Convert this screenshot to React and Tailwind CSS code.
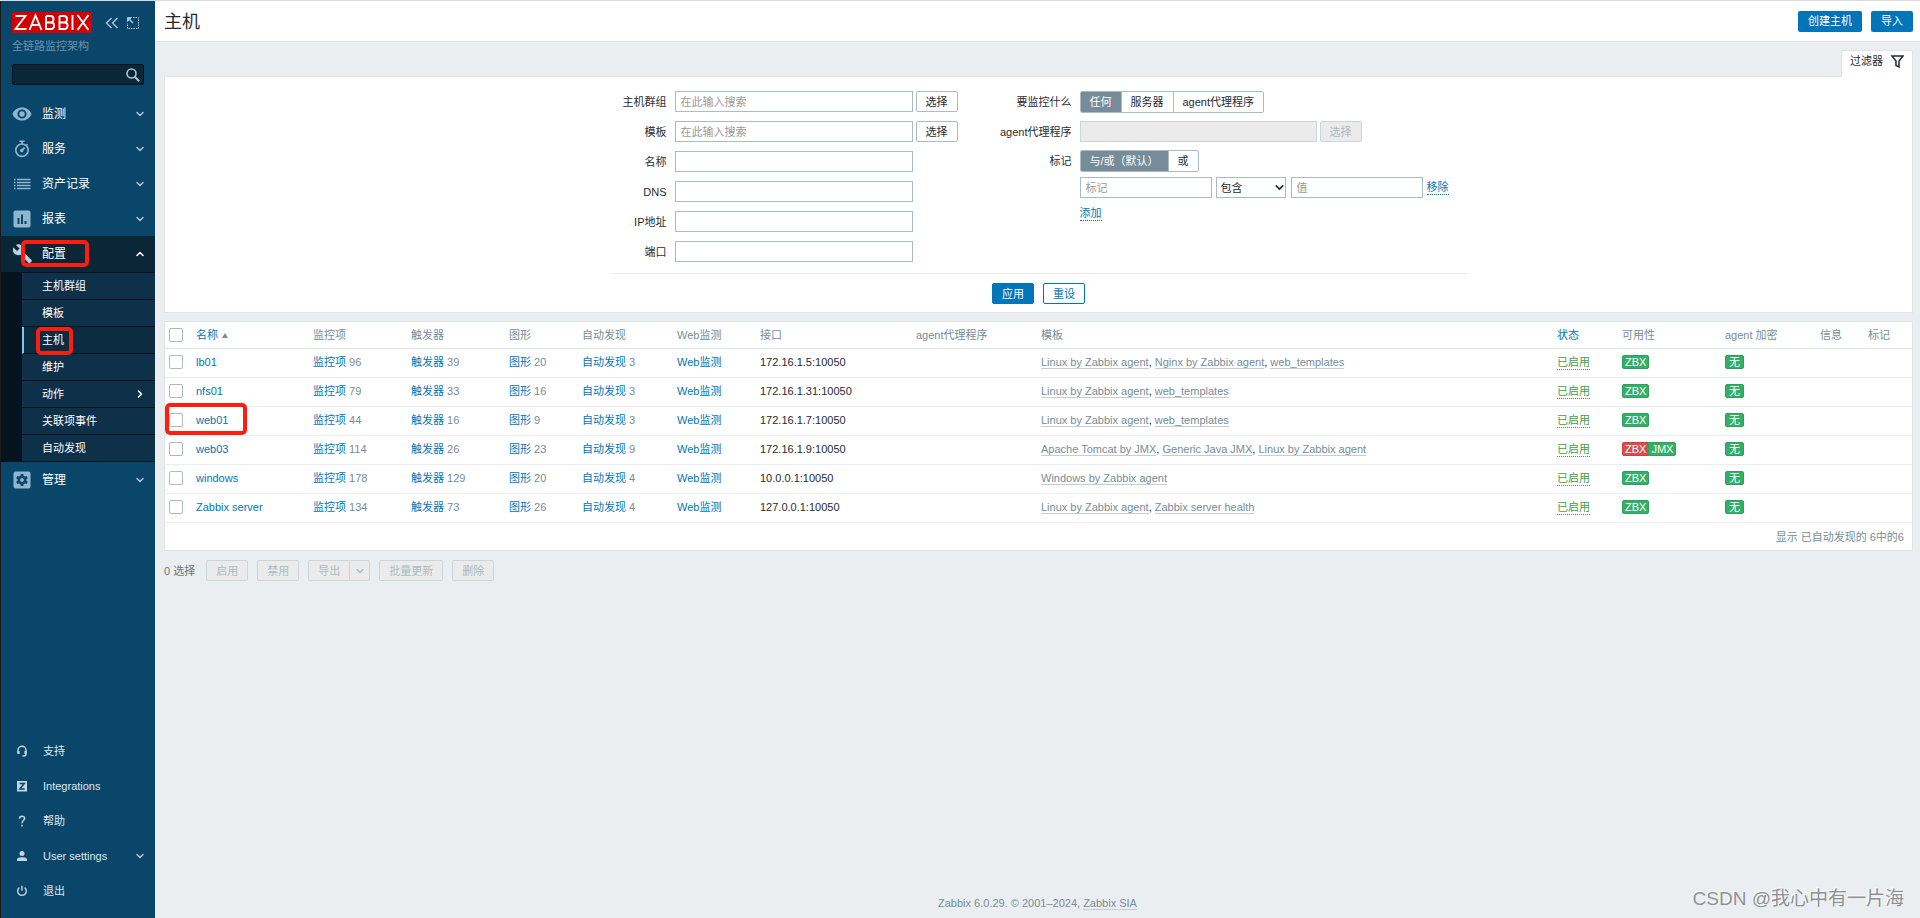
import { useState } from 'react'
import { ChevronDown, ChevronRight, ChevronUp } from 'lucide-react'
import clsx from 'clsx'

const MENU = [
  { label: '监测', icon: EyeIcon },
  { label: '服务', icon: StopwatchIcon },
  { label: '资产记录', icon: ListIcon },
  { label: '报表', icon: ChartIcon }
]

const SUBMENU = [
  { label: '主机群组' },
  { label: '模板' },
  { label: '主机', active: true, marked: true },
  { label: '维护' },
  { label: '动作', nested: true },
  { label: '关联项事件' },
  { label: '自动发现' }
]

const USER_MENU = [
  { label: '支持', icon: HeadsetIcon },
  { label: 'Integrations', icon: IntegrationsIcon },
  { label: '帮助', icon: HelpIcon },
  { label: 'User settings', icon: UserIcon, nested: true },
  { label: '退出', icon: PowerIcon }
]

const LINUX = 'Linux by Zabbix agent'

const HOSTS = [
  { name: 'lb01', items: 96, triggers: 39, graphs: 20, discovery: 3, iface: '172.16.1.5:10050', templates: [LINUX, 'Nginx by Zabbix agent', 'web_templates'] },
  { name: 'nfs01', items: 79, triggers: 33, graphs: 16, discovery: 3, iface: '172.16.1.31:10050', templates: [LINUX, 'web_templates'] },
  { name: 'web01', items: 44, triggers: 16, graphs: 9, discovery: 3, iface: '172.16.1.7:10050', templates: [LINUX, 'web_templates'], marked: true },
  { name: 'web03', items: 114, triggers: 26, graphs: 23, discovery: 9, iface: '172.16.1.9:10050', templates: ['Apache Tomcat by JMX', 'Generic Java JMX', LINUX], jmx: true },
  { name: 'windows', items: 178, triggers: 129, graphs: 20, discovery: 4, iface: '10.0.0.1:10050', templates: ['Windows by Zabbix agent'] },
  { name: 'Zabbix server', items: 134, triggers: 73, graphs: 26, discovery: 4, iface: '127.0.0.1:10050', templates: [LINUX, 'Zabbix server health'] }
]

const INPUT = 'block h-[21px] border border-[#acbbc2] bg-white px-[5px] text-[11px] placeholder:text-[#9a9a9a] focus:outline-none'
const CHECKBOX = 'block size-[14px] appearance-none rounded-[2px] border border-[#acbbc2] bg-white'

function EyeIcon() {
  return (
    <svg width="20" height="20" viewBox="0 0 20 20" fill="#8fb6d1">
      <path fillRule="evenodd" d="M10 3.500C5.600 3.500 2 6 .5 10 2 14 5.600 16.500 10 16.500s8-2.500 9.500-6.500C18 6 14.400 3.500 10 3.500zM10 14.600a4.600 4.600 0 1 1 0-9.200 4.600 4.600 0 0 1 0 9.200z" />
      <circle cx="10" cy="10" r="2.700" />
    </svg>
  )
}

function StopwatchIcon() {
  return (
    <svg width="20" height="20" viewBox="0 0 20 20" fill="none" stroke="#8fb6d1" strokeWidth="1.600">
      <circle cx="10" cy="11.200" r="6.200" />
      <path d="M7.500 2.300h5M10 2.300v2.700M14.200 6.500l1.300-1.300" />
      <path d="M12.600 8.600L10 11.200" strokeWidth="2" />
      <circle cx="9.700" cy="11.500" r="1" fill="#8fb6d1" />
    </svg>
  )
}

function ListIcon() {
  return (
    <svg width="20" height="20" viewBox="0 0 20 20" stroke="#8fb6d1" strokeWidth="1.400">
      <path d="M5 5.500h13.500M5 8.500h13.500M5 11.500h13.500M5 14.500h13.500M2 5.500h1.500M2 8.500h1.500M2 11.500h1.500M2 14.500h1.500" />
    </svg>
  )
}

function ChartIcon() {
  return (
    <svg width="20" height="20" viewBox="0 0 20 20">
      <rect x="1.500" y="1.500" width="17" height="17" rx="2" fill="#8fb6d1" />
      <path d="M6.500 9v6M10 5.500V15M13.500 12v3" stroke="#0a466a" strokeWidth="2" />
    </svg>
  )
}

function WrenchIcon() {
  return (
    <svg width="20" height="20" viewBox="0 0 20 20" fill="#b9d3e4">
      <path d="M18.500 16L10.300 7.900c.8-2 .4-4.300-1.300-6C7.300.3 4.900-.1 2.900.9l3.700 3.600L4 7.100.3 3.500c-1 2-.6 4.400 1.100 6 1.700 1.700 4.100 2.100 6.100 1.300l8.200 8.100c.4.400.9.400 1.300 0l1.500-1.500c.4-.4.400-1.100 0-1.400z" />
    </svg>
  )
}

function GearIcon() {
  return (
    <svg width="20" height="20" viewBox="0 0 20 20">
      <rect x="1.500" y="1.500" width="17" height="17" rx="2" fill="#8fb6d1" />
      <circle cx="10" cy="10" r="3.200" fill="none" stroke="#0a466a" strokeWidth="2.600" />
      <path d="M10 4v2M10 14v2M4.800 7l1.700 1M13.500 12l1.700 1M4.800 13l1.700-1M13.500 8l1.700-1" stroke="#0a466a" strokeWidth="2.800" />
    </svg>
  )
}

function HeadsetIcon() {
  return (
    <svg width="12" height="12" viewBox="0 0 12 12" fill="none" stroke="#c3d6e3" strokeWidth="1.400">
      <path d="M2 8V5.200a4 4 0 0 1 8 0V9c0 1.300-.8 2-2.200 2H6.500" />
      <path d="M2.500 6v3M9.500 6v3" strokeWidth="2.200" />
    </svg>
  )
}

function IntegrationsIcon() {
  return (
    <svg width="12" height="12" viewBox="0 0 12 12">
      <rect x="1" y="1" width="10" height="10.500" fill="#c3d6e3" />
      <path d="M3.500 3.500h4.800L3.800 9h4.900" fill="none" stroke="#0a466a" strokeWidth="1.500" />
    </svg>
  )
}

function HelpIcon() {
  return (
    <svg width="12" height="12" viewBox="0 0 12 12" fill="none" stroke="#c3d6e3" strokeWidth="1.500">
      <path d="M3.500 3.800C3.500 2 4.500 1.200 6 1.200s2.600.9 2.600 2.200C8.600 5.300 6 5.300 6 8.200M6 9.800v1.600" />
    </svg>
  )
}

function UserIcon() {
  return (
    <svg width="12" height="12" viewBox="0 0 12 12" fill="#c3d6e3">
      <circle cx="6" cy="3.500" r="2.500" />
      <path d="M1 11V9.500C1 8 4 7.300 6 7.300s5 .7 5 2.200V11z" />
    </svg>
  )
}

function PowerIcon() {
  return (
    <svg width="12" height="12" viewBox="0 0 12 12" fill="none" stroke="#c3d6e3" strokeWidth="1.400">
      <path d="M6 .8v5M3.400 2.600a4.300 4.300 0 1 0 5.200 0" />
    </svg>
  )
}

function Mark({ className }) {
  return (
    <span className={clsx('pointer-events-none absolute z-10 rounded-[5px] border-4 border-[#ff1d10]', className)} />
  )
}

function Sidebar() {
  return (
    <aside className="flex w-[155px] shrink-0 flex-col border-l border-[#1b1b1d] bg-[#0a466a] text-[12px] text-white">
      <div className="mt-[11px] flex items-center pl-[11px]">
        <a href="#" aria-label="Zabbix" className="block bg-[#d40000]">
          <svg width="80" height="21" viewBox="0 0 80 21" fill="none" stroke="#fff" strokeWidth="1.900">
            <path d="M3.500 4h10L3.500 17h11M17.500 18l6-14.500 6 14.500M19.500 13h8" />
            <path d="M34 4v13h4.500c4.800 0 4.800-6.500 0-6.500H34M38.500 10.500c4 0 4-6.500 0-6.500H34M47.500 4v13H52c4.800 0 4.800-6.500 0-6.500h-4.500M52 10.500c4 0 4-6.500 0-6.500h-4.500" />
            <path d="M60.500 3v15M65.500 3l11 15M76.500 3l-11 15" />
          </svg>
        </a>
        <button aria-label="收起" className="ml-[13px]">
          <svg width="14" height="12" viewBox="0 0 14 12" fill="none" stroke="#a9c6da" strokeWidth="1.400">
            <path d="M6.500 1l-5 5 5 5M12.500 1l-5 5 5 5" />
          </svg>
        </button>
        <button aria-label="隐藏" className="ml-2">
          <svg width="12" height="12" viewBox="0 0 12 12" fill="none" stroke="#a9c6da">
            <path d="M6 .5h5.500v11H.5V6" strokeDasharray="1.500 1" />
            <path d="M1 1l5 5" strokeWidth="1.500" />
            <path d="M.5.500h4l-4 4z" fill="#a9c6da" />
          </svg>
        </button>
      </div>
      <div className="mt-[5px] pl-[11px] text-[11px] leading-4 text-[#6c93ad]">全链路监控架构</div>
      <label className="mx-[11px] mt-[10px] flex h-[21px] items-center rounded-[2px] border border-[#03131f] bg-[#0b2637] pr-[3px]">
        <input aria-label="搜索" className="h-full w-full min-w-0 bg-transparent px-1 text-[11px] focus:outline-none" />
        <svg width="14" height="14" viewBox="0 0 14 14" fill="none" stroke="#a9c6da" strokeWidth="1.600" className="shrink-0">
          <circle cx="5.500" cy="5.500" r="4.500" />
          <path d="M8.700 8.700l4.500 4.500" strokeWidth="2" />
        </svg>
      </label>

      <nav className="mt-[11px]">
        {MENU.map(({ label, icon: Icon }) => (
          <a key={label} href="#" className="flex h-[35px] items-center pr-[9px] pl-[11px]">
            <Icon />
            <span className="ml-[10px] flex-1">{label}</span>
            <ChevronDown className="size-3 text-[#a9c6da]" strokeWidth={3} />
          </a>
        ))}
        <a href="#" className="relative flex h-9 items-center bg-[#0b2637] pr-[9px] pl-[12px]">
          <WrenchIcon />
          <span className="ml-[9px] flex-1">配置</span>
          <ChevronUp className="size-3" strokeWidth={3} />
          <Mark className="top-[4px] left-[20px] h-[27px] w-[68px]" />
        </a>
        <div className="bg-[#04131d] pt-px pl-[21px] text-[11px]">
          {SUBMENU.map((item) => (
            <a
              key={item.label}
              href="#"
              className={clsx(
                'relative flex h-[27px] items-center border-b border-[#04131d] pr-[9px]',
                item.active ? 'border-l-2 border-l-[#7cc5f0] bg-[#0b2b40] pl-[18px]' : 'bg-[#0f3049] pl-[20px]'
              )}
            >
              <span className="flex-1">{item.label}</span>
              {item.nested && <ChevronRight className="size-3" strokeWidth={3} />}
              {item.marked && <Mark className="top-0 left-[12px] h-7 w-[37px]" />}
            </a>
          ))}
        </div>
        <a href="#" className="flex h-9 items-center pr-[9px] pl-[11px]">
          <GearIcon />
          <span className="ml-[10px] flex-1">管理</span>
          <ChevronDown className="size-3 text-[#a9c6da]" strokeWidth={3} />
        </a>
      </nav>

      <nav className="mt-auto mb-[10px] text-[11px] text-[#dce8f0]">
        {USER_MENU.map(({ label, icon: Icon, nested }) => (
          <a key={label} href="#" className="flex h-[35px] items-center pr-[9px] pl-[15px]">
            <Icon />
            <span className="ml-[15px] flex-1">{label}</span>
            {nested && <ChevronDown className="size-3 text-[#a9c6da]" strokeWidth={3} />}
          </a>
        ))}
      </nav>
    </aside>
  )
}

function Field({ id, label, labelWidth, children }) {
  return (
    <div className="flex items-center">
      <label htmlFor={id} className={clsx('mr-2 shrink-0 text-right', labelWidth)}>{label}</label>
      {children}
    </div>
  )
}

function SelectButton({ disabled }) {
  return (
    <button
      disabled={disabled}
      className="ml-[3px] h-[21px] rounded-[2px] border border-[#acbbc2] bg-white px-[9px] disabled:border-[#ccd5d9] disabled:bg-[#ebebeb] disabled:text-[#acbbc2]"
    >
      选择
    </button>
  )
}

function Segmented({ name, options }) {
  const [value, setValue] = useState(options[0])
  return (
    <div className="flex h-[22px] overflow-hidden rounded-[2px] border border-[#acbbc2]">
      {options.map((option) => (
        <label
          key={option}
          className="flex items-center border-l border-[#acbbc2] px-[9px] first:border-l-0 has-checked:bg-[#768d99] has-checked:text-white"
        >
          <input
            type="radio"
            name={name}
            checked={value === option}
            onChange={() => setValue(option)}
            className="sr-only"
          />
          {option}
        </label>
      ))}
    </div>
  )
}

function Filter() {
  return (
    <section className="border border-[#dfe4e7] bg-white pt-[14px] pb-2">
      <div className="mx-auto w-[856px]">
        <div className="flex h-[183px] gap-[42px] border-b border-[#ebeef0]">
          <div className="flex flex-col gap-[9px]">
            <Field id="groups" label="主机群组" labelWidth="w-14">
              <input id="groups" className={clsx(INPUT, 'w-[238px]')} placeholder="在此输入搜索" />
              <SelectButton />
            </Field>
            <Field id="templates" label="模板" labelWidth="w-14">
              <input id="templates" className={clsx(INPUT, 'w-[238px]')} placeholder="在此输入搜索" />
              <SelectButton />
            </Field>
            {['名称', 'DNS', 'IP地址', '端口'].map((label) => (
              <Field key={label} id={label} label={label} labelWidth="w-14">
                <input id={label} className={clsx(INPUT, 'w-[238px]')} />
              </Field>
            ))}
          </div>
          <div className="flex flex-col gap-2">
            <Field label="要监控什么" labelWidth="w-[72px]">
              <Segmented name="monitored_by" options={['任何', '服务器', 'agent代理程序']} />
            </Field>
            <Field id="proxy" label="agent代理程序" labelWidth="w-[72px]">
              <input id="proxy" disabled className="h-[21px] w-[237px] border border-[#ccd5d9] bg-[#ebebeb] px-[5px]" />
              <SelectButton disabled />
            </Field>
            <Field label="标记" labelWidth="w-[72px]">
              <Segmented name="evaltype" options={['与/或（默认）', '或']} />
            </Field>
            <div className="-mt-[3px] ml-20">
              <div className="flex items-center">
                <input aria-label="标记" placeholder="标记" className={clsx(INPUT, 'w-[132px]')} />
                <div className="relative ml-1">
                  <select aria-label="运算符" className="block h-[21px] w-[70px] appearance-none border border-[#acbbc2] bg-white px-1 text-[11px]">
                    <option>包含</option>
                    <option>等于</option>
                  </select>
                  <ChevronDown className="pointer-events-none absolute top-1 right-0 size-[13px]" strokeWidth={3} />
                </div>
                <input aria-label="值" placeholder="值" className={clsx(INPUT, 'ml-[5px] w-[132px]')} />
                <a href="#" className="ml-1 border-b border-dotted border-[#0275b8] leading-[14px] text-[#0275b8]">移除</a>
              </div>
              <a href="#" className="mt-2 inline-block border-b border-dotted border-[#0275b8] leading-[14px] text-[#0275b8]">添加</a>
            </div>
          </div>
        </div>
        <div className="mt-[9px] flex justify-center gap-[9px]">
          <button className="h-[21px] rounded-[2px] border border-[#0275b8] bg-[#0275b8] px-[9px] text-white">应用</button>
          <button className="h-[21px] rounded-[2px] border border-[#0275b8] bg-white px-[9px] text-[#0275b8]">重设</button>
        </div>
      </div>
    </section>
  )
}

function CountCell({ label, count }) {
  return (
    <td className="text-[#768d99]">
      <a href="#" className="text-[#0275b8]">{label}</a> {count}
    </td>
  )
}

function HostTable() {
  return (
    <section className="mt-2 border border-[#dfe4e7] bg-white">
      <table className="w-full table-fixed border-separate border-spacing-0 text-left">
        <colgroup>
          <col className="w-[26px]" />
          <col className="w-[117px]" />
          <col className="w-[98px]" />
          <col className="w-[98px]" />
          <col className="w-[73px]" />
          <col className="w-[95px]" />
          <col className="w-[83px]" />
          <col className="w-[156px]" />
          <col className="w-[125px]" />
          <col />
          <col className="w-[65px]" />
          <col className="w-[103px]" />
          <col className="w-[95px]" />
          <col className="w-[48px]" />
          <col className="w-[49px]" />
        </colgroup>
        <thead>
          <tr className="h-[27px] whitespace-nowrap text-[#768d99] *:border-b *:border-[#dfe4e7] *:px-[5px] *:pb-px *:font-normal">
            <th><input type="checkbox" aria-label="全选" className={clsx(CHECKBOX, '-ml-px')} /></th>
            <th>
              <a href="#" className="flex items-center gap-1 text-[#0275b8]">
                名称
                <svg width="6" height="6" viewBox="0 0 6 6" fill="#768d99"><path d="M3 1l3 5H0z" /></svg>
              </a>
            </th>
            <th>监控项</th>
            <th>触发器</th>
            <th>图形</th>
            <th>自动发现</th>
            <th>Web监测</th>
            <th>接口</th>
            <th>agent代理程序</th>
            <th>模板</th>
            <th><a href="#" className="text-[#0275b8]">状态</a></th>
            <th>可用性</th>
            <th>agent 加密</th>
            <th>信息</th>
            <th>标记</th>
          </tr>
        </thead>
        <tbody>
          {HOSTS.map((host) => (
            <tr key={host.name} className="h-[29px] whitespace-nowrap *:border-b *:border-[#ebeef0] *:px-[5px] *:pb-[3px]">
              <td className="relative">
                <input type="checkbox" aria-label={host.name} className={clsx(CHECKBOX, '-ml-px')} />
                {host.marked && <Mark className="top-[-4px] left-0 h-8 w-[82px]" />}
              </td>
              <td><a href="#" className="text-[#0275b8]">{host.name}</a></td>
              <CountCell label="监控项" count={host.items} />
              <CountCell label="触发器" count={host.triggers} />
              <CountCell label="图形" count={host.graphs} />
              <CountCell label="自动发现" count={host.discovery} />
              <CountCell label="Web监测" />
              <td>{host.iface}</td>
              <td />
              <td>
                {host.templates.map((template, i) => (
                  <span key={template}>
                    {i > 0 && ', '}
                    <a href="#" className="border-b border-[#c3cdd2] text-[#768d99]">{template}</a>
                  </span>
                ))}
              </td>
              <td>
                <a href="#" className="inline-block border-b border-dotted border-[#429e47] leading-[13px] text-[#429e47]">已启用</a>
              </td>
              <td>
                <div className="flex text-white">
                  <span
                    className={clsx(
                      'border px-[2px] leading-3',
                      host.jmx ? 'rounded-l-[2px] border-[#d04040] bg-[#d64e4e]' : 'rounded-[2px] border-[#2f9f5e] bg-[#34af67]'
                    )}
                  >
                    ZBX
                  </span>
                  {host.jmx && (
                    <span className="-ml-px rounded-r-[2px] border border-[#2f9f5e] bg-[#34af67] px-[2px] leading-3">JMX</span>
                  )}
                </div>
              </td>
              <td>
                <div className="flex text-white">
                  <span className="rounded-[2px] border border-[#2f9f5e] bg-[#34af67] px-[3px] leading-3">无</span>
                </div>
              </td>
              <td />
              <td />
            </tr>
          ))}
        </tbody>
      </table>
      <div className="flex h-[27px] items-center justify-end pr-2 text-[#768d99]">显示 已自动发现的 6中的6</div>
    </section>
  )
}

function Actions() {
  const button = 'h-[21px] border border-[#ccd5d9] bg-[#ebebeb] px-[9px] text-[#acbbc2]'
  return (
    <div className="mt-[9px] flex items-center gap-[9px]">
      <span className="mr-[2px] text-[#66777f]">0 选择</span>
      <button disabled className={clsx(button, 'rounded-[2px]')}>启用</button>
      <button disabled className={clsx(button, 'rounded-[2px]')}>禁用</button>
      <div className="flex">
        <button disabled className={clsx(button, 'rounded-l-[2px]')}>导出</button>
        <button disabled aria-label="导出格式" className="-ml-px flex h-[21px] w-[21px] items-center justify-center rounded-r-[2px] border border-[#ccd5d9] bg-[#ebebeb] text-[#acbbc2]">
          <ChevronDown className="size-3" strokeWidth={3} />
        </button>
      </div>
      <button disabled className={clsx(button, 'rounded-[2px]')}>批量更新</button>
      <button disabled className={clsx(button, 'rounded-[2px]')}>删除</button>
    </div>
  )
}

export default function App() {
  return (
    <div className="relative flex min-h-screen border-t border-[#dadada] bg-[#ebeef0] font-['Liberation_Sans','Noto_Sans_CJK_SC',sans-serif] text-[11px] leading-4 text-[#1f2c33]">
      <Sidebar />
      <div className="flex min-w-0 flex-1 flex-col">
        <header className="flex h-[41px] items-center gap-[9px] border-b border-[#dfe4e7] bg-white pr-[7px] pl-[9px]">
          <h1 className="flex-1 pt-[2px] text-[18px]">主机</h1>
          <button className="h-[21px] rounded-[2px] bg-[#0275b8] px-[10px] text-white">创建主机</button>
          <button className="h-[21px] rounded-[2px] bg-[#0275b8] px-[10px] text-white">导入</button>
        </header>
        <main className="flex-1 pt-2 pr-[7px] pl-[9px]">
          <div className="relative z-10 -mb-px flex justify-end">
            <button className="flex h-[27px] items-center gap-2 border border-b-0 border-[#dfe4e7] bg-white px-2 pb-[6px]">
              过滤器
              <svg width="13" height="13" viewBox="0 0 13 13" fill="none" stroke="#1f2c33" strokeWidth="1.500">
                <path d="M1 1h11L8 6v6l-3-1.500V6z" />
              </svg>
            </button>
          </div>
          <Filter />
          <HostTable />
          <Actions />
        </main>
        <footer className="pb-[7px] text-center text-[#768d99]">
          Zabbix 6.0.29. © 2001–2024, <a href="#" className="border-b border-[#c3cdd2]">Zabbix SIA</a>
        </footer>
      </div>
      <div className="pointer-events-none absolute right-4 bottom-[7px] text-[19px] leading-6 text-[#8e9194] [text-shadow:-1px_-1px_0_#fff]">
        CSDN @我心中有一片海
      </div>
    </div>
  )
}
